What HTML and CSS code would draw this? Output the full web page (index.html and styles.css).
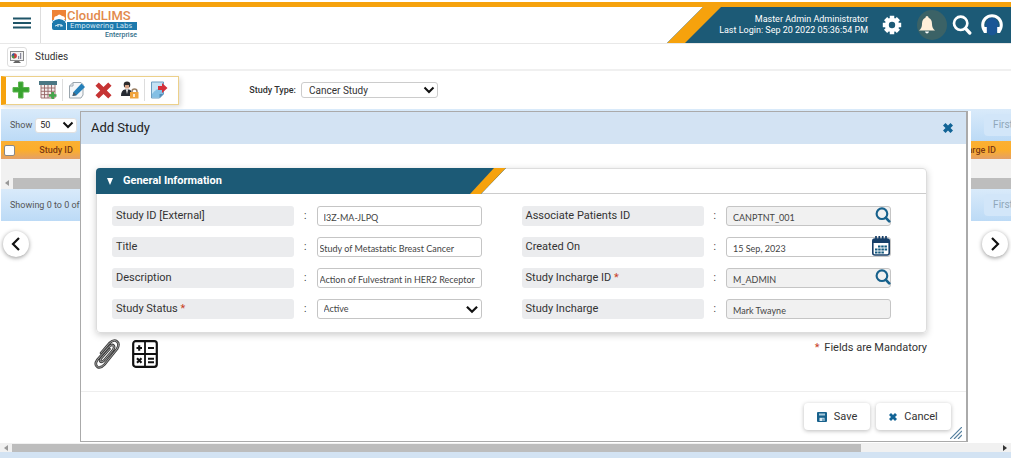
FILE: index.html
```html
<!DOCTYPE html>
<html lang="en">
<head>
<meta charset="utf-8">
<title>CloudLIMS - Studies</title>
<link rel="stylesheet" href="styles.css">
</head>
<body>
<svg class="defs" aria-hidden="true">
  <symbol id="chevron" viewBox="0 0 12 8"><path d="M1.500 1.500 6 6l4.500-4.500" fill="none" stroke="#111" stroke-width="2"/></symbol>
  <symbol id="search" viewBox="0 0 18 18"><circle cx="7.800" cy="7.500" r="6" fill="none" stroke="currentColor" stroke-width="2.400"/><path d="m12.300 12.300 3.700 3.900" stroke="currentColor" stroke-width="3" stroke-linecap="round"/></symbol>
  <symbol id="cross" viewBox="0 0 10 10"><path d="M2.500 0 5 2.500 7.500 0 10 2.500 7.500 5 10 7.500 7.500 10 5 7.500 2.500 10 0 7.500 2.500 5 0 2.500z"/></symbol>
</svg>
<div class="app">
  <header class="topbar">
    <button class="menu" aria-label="Menu"><svg width="18" height="12" viewBox="0 0 18 12"><path d="M0 1.500h18M0 6h18M0 10.500h18" stroke="#1f5568" stroke-width="1.800"/></svg></button>
    <a class="logo" href="#">
      <svg width="14" height="20" viewBox="0 0 14 20"><path d="M0 0h14v10H0z" fill="#ee8336"/><path d="M0 10h14v10H2q-2 0-2-2z" fill="#1d79ad"/><path d="M2 9q0-3 3-3 2-3 5 0 3 0 3 3l-2 1H3z" fill="#fff"/><path d="M0 11q7-7 14 0v2q-7-6-14 0z" fill="#fff"/><path d="M1 12.500q6-5 12 0" fill="none" stroke="#1d79ad" stroke-width="2"/><path d="M3 16q4-3 8 0M6 14v3M9 14v3" fill="none" stroke="#d5e9f3"/></svg>
      <span class="logo-text"><span class="brand">CloudLIMS</span><span class="motto">Empowering Labs</span><span class="edition">Enterprise</span></span>
    </a>
    <div class="account">
      <div class="who"><span>Master Admin Administrator</span><span>Last Login: Sep 20 2022 05:36:54 PM</span></div>
      <button class="round" aria-label="Settings"><svg width="20" height="20" viewBox="0 0 20 20"><g stroke="#fff" stroke-width="4.500"><path d="M10 .8v18.400M.8 10h18.400M3.600 3.600l12.800 12.800M16.400 3.600 3.600 16.400"/></g><circle cx="10" cy="10" r="7.200" fill="#fff"/><circle cx="10" cy="10" r="3.200" fill="#1c5a76"/></svg></button>
      <button class="round bell" aria-label="Notifications"><svg width="18" height="20" viewBox="0 0 18 20"><path d="M9 1q1.500 0 1.600 1.700Q14 4 14 9q0 4 3 6.500H1Q4 13 4 9q0-5 3.400-6.300Q7.500 1 9 1z" fill="#ffefd9"/><path d="M7 16.500h4q-.5 2-2 2t-2-2z" fill="#fff"/></svg></button>
      <button class="round" aria-label="Search"><svg width="20" height="20"><use href="#search"/></svg></button>
      <button class="round" aria-label="Support"><svg width="22" height="22" viewBox="0 0 22 22"><ellipse cx="11" cy="12.500" rx="6.500" ry="9" fill="#1a5696"/><path d="M4.500 18Q1.700 15 1.700 11a9.300 9.300 0 0 1 18.600 0q0 4-2.800 7" fill="none" stroke="#fff" stroke-width="3"/><path d="M4.300 13v6M17.700 13v6" stroke="#fff" stroke-width="3"/></svg></button>
    </div>
  </header>
  <nav class="crumb">
    <span class="crumb-icon"><svg width="14" height="14" viewBox="0 0 14 14"><rect x=".5" y="1.500" width="13" height="9" fill="#f1f1f1" stroke="#888"/><circle cx="4.300" cy="5.800" r="2.600" fill="#d23b37"/><path d="M4.300 5.800V3.200a2.600 2.600 0 0 0-2.600 2.600z" fill="#275ea8"/><path d="M4.300 5.800H1.700a2.600 2.600 0 0 0 2.600 2.600z" fill="#3d9b4a"/><path d="M8 9V6h1.200v3zm2 0V3h1.200v6z" fill="#889"/><path d="M5 11h4l2 2H3z" fill="#666"/></svg></span>
    <span>Studies</span>
  </nav>
  <div class="actions">
    <div class="tools">
      <button aria-label="Add"><svg width="18" height="18" viewBox="0 0 18 18"><path d="M6.500 1h4.500v5.500H17V11h-6v6H6.500v-6H1V6.500h5.500z" fill="#38a32f" stroke="#5bb44e"/></svg></button>
      <button aria-label="Add to table"><svg width="18" height="18" viewBox="0 0 18 18"><path d="M0 0h18v4H0z" fill="#4a7683"/><path d="M2 4h14v13H2z" fill="#f3eceb"/><path d="M2 4v13M5.500 4v13M9 4v13M12.500 4v13M16 4v13M2 7h14M2 10.300h14M2 13.600h14M2 17h14" stroke="#956565" stroke-width=".9"/><path d="M12.500 11h2.500v2.200h2.500v2.500H15V18h-2.500v-2.300H10v-2.500h2.500z" fill="#43a64b"/></svg></button>
      <i class="bar"></i>
      <button aria-label="Edit"><svg width="18" height="18" viewBox="0 0 18 18"><path d="M5 1.500h8l2 2V14l-2 3H1.500V5z" fill="#f5f7f9" stroke="#9aa5ad"/><path d="M1.500 5H5V1.500" fill="none" stroke="#9aa5ad"/><path d="M13.500 2.500 17 6l-8.500 8.200-4 .8 1-4z" fill="#2580b9"/><path d="m4.500 15 1-4 3 3.200z" fill="#4c5a66"/></svg></button>
      <button aria-label="Delete"><svg width="17" height="17" viewBox="0 0 18 18"><path d="M4 .5 9 5.300 14 .5 17.500 4l-5 5 5 5-3.500 3.500-5-4.800-5 4.800L.5 14l5-5-5-5z" fill="#c63434"/></svg></button>
      <button aria-label="Lock user"><svg width="18" height="18" viewBox="0 0 18 18"><circle cx="6" cy="3.800" r="3.300" fill="#2e2b2c"/><path d="M4 4h4v3.500H4z" fill="#d8a487"/><path d="M0 15q0-6 4-6.500h4q3 .5 3.500 6.500z" fill="#252a32"/><path d="M5 8.500h2L6 13z" fill="#fff"/><path d="M11 12v-1.500a2.500 2.500 0 0 1 5 0V12" fill="none" stroke="#9b8064" stroke-width="1.500"/><rect x="9" y="11" width="8.500" height="6.500" fill="#f0a33b"/><path d="M13 13v3" stroke="#fff" stroke-width="1.500"/></svg></button>
      <i class="bar"></i>
      <button aria-label="Export"><svg width="18" height="18" viewBox="0 0 18 18"><path d="M1.500 1h12v12l-4 4h-8z" fill="#c4e2f4" stroke="#6b9cc0"/><path d="M2 13q4-6 11-6v6l-4 3.500H2z" fill="#83bfe4"/><path d="M9.500 13h4l-4 4z" fill="#4f8db8"/><path d="M8 5h4V2l5.500 5-5.500 5V9H8z" fill="#d4313a"/></svg></button>
    </div>
    <label class="type-label" for="type">Study Type:</label>
    <span class="picker type-picker"><select id="type"><option>Cancer Study</option></select><svg width="12" height="8"><use href="#chevron"/></svg></span>
  </div>

  <main class="stage">
    <section class="listing">
      <div class="band">
        <label for="size">Show</label>
        <span class="picker size-picker"><select id="size"><option>50</option></select><svg width="12" height="8"><use href="#chevron"/></svg></span>
        <button class="first" disabled>First</button>
      </div>
      <table class="grid">
        <thead><tr><th class="check"><input type="checkbox" aria-label="Select all"></th><th class="sid">Study ID</th><th class="inc">Study Incharge ID</th></tr></thead>
        <tbody><tr><td></td><td></td><td></td></tr></tbody>
      </table>
      <div class="hscroll"><i class="arrow"></i><i class="thumb"></i></div>
      <div class="band"><span>Showing 0 to 0 of</span><button class="first" disabled>First</button></div>
      <div class="pager">
        <button aria-label="Previous"><svg width="10" height="14" viewBox="0 0 10 14"><path d="M8 1 2 7l6 6" fill="none" stroke="#111" stroke-width="2.200"/></svg></button>
        <button aria-label="Next"><svg width="10" height="14" viewBox="0 0 10 14"><path d="m2 1 6 6-6 6" fill="none" stroke="#111" stroke-width="2.200"/></svg></button>
      </div>
    </section>

    <form class="dialog" role="dialog" aria-labelledby="dlg">
      <div class="dialog-head"><h1 id="dlg">Add Study</h1><button type="button" class="close" aria-label="Close"><svg width="10" height="10" fill="#126496"><use href="#cross"/></svg></button></div>
      <div class="dialog-body">
        <section class="card">
          <div class="card-head"><h2><svg width="6" height="7" viewBox="0 0 6 7"><path d="M0 0h6L3 7z" fill="#fff"/></svg>General Information</h2></div>
          <div class="fields">
            <div class="field"><label for="f1">Study ID [External]</label><b>:</b><span class="box"><input id="f1" value="I3Z-MA-JLPQ"></span></div>
            <div class="field"><label for="f5">Associate Patients ID</label><b>:</b><span class="box"><input id="f5" value="CANPTNT_001" readonly><svg class="find" width="16" height="16"><use href="#search"/></svg></span></div>
            <div class="field"><label for="f2">Title</label><b>:</b><span class="box"><input id="f2" class="tight" value="Study of Metastatic Breast Cancer"></span></div>
            <div class="field"><label for="f6">Created On</label><b>:</b><span class="box"><input id="f6" value="15 Sep, 2023"><svg class="cal" width="18" height="20" viewBox="0 0 18 20"><rect x=".8" y="3" width="16.400" height="16" rx="2" fill="#fff" stroke="#173f68" stroke-width="1.600"/><path d="M1 3h16v4H1z" fill="#173f68"/><path d="M4 0v4M7.300 0v4M10.700 0v4M14 0v4" stroke="#173f68" stroke-width="1.700"/><path d="M6 10.500h9.500M3 13.500h12.500M3 16.500h9" stroke="#155b80" stroke-width="2.200" stroke-dasharray="2.500 .7"/></svg></span></div>
            <div class="field"><label for="f3">Description</label><b>:</b><span class="box"><input id="f3" class="tight" value="Action of Fulvestrant in HER2 Receptor"></span></div>
            <div class="field"><label for="f7">Study Incharge ID <em>*</em></label><b>:</b><span class="box"><input id="f7" value="M_ADMIN" readonly><svg class="find" width="16" height="16"><use href="#search"/></svg></span></div>
            <div class="field"><label for="f4">Study Status <em>*</em></label><b>:</b><span class="box picker"><select id="f4"><option>Active</option></select><svg width="14" height="9"><use href="#chevron"/></svg></span></div>
            <div class="field"><label for="f8">Study Incharge</label><b>:</b><span class="box"><input id="f8" value="Mark Twayne" readonly></span></div>
          </div>
        </section>
        <div class="extras">
          <button type="button" aria-label="Attachments"><svg width="26" height="30" viewBox="0 0 26 30"><g fill="none" stroke-linecap="round" stroke-linejoin="round"><path d="M7 14 15.500 4q4.500-4 7.500-1.500t0 7.500L10.500 25.500Q7 29.500 3.500 28q-3.500-2.500 0-7.500L15 7.500q3-2.500 4.500-1t-.5 4.500L10 21.500q-2.500 2-3.500 1t.5-3L15.500 10" stroke="#3c3c3c" stroke-width="2.600"/><path d="M7 14 15.500 4q4.500-4 7.500-1.500t0 7.500L10.500 25.500Q7 29.500 3.500 28q-3.500-2.500 0-7.500L15 7.500q3-2.500 4.500-1t-.5 4.500L10 21.500q-2.500 2-3.500 1t.5-3L15.500 10" stroke="#aaa" stroke-width=".9"/></g></svg></button>
          <button type="button" aria-label="Calculator"><svg width="26" height="28" viewBox="0 0 26 28"><rect x="1.200" y="1.200" width="23.600" height="25.600" rx="2.500" fill="#fff" stroke="#111" stroke-width="2.200"/><path d="M13 1v26M1 14h24" stroke="#111" stroke-width="1.800"/><path d="M4.500 8h5.500M7.200 5.300v5.400M16 8h6M5 18.300l4.500 4.500M9.500 18.300 5 22.800M16 18.800h6M16 22.300h6" stroke="#111" stroke-width="2.100"/></svg></button>
          <p><em>*</em> Fields are Mandatory</p>
        </div>
      </div>
      <div class="dialog-foot">
        <button type="submit"><svg width="10" height="10" viewBox="0 0 10 10"><rect width="10" height="10" rx="1" fill="#17618c"/><path d="M2 1.500h6v2H2z" fill="#a8cbdd"/><path d="M2.500 5.800h5V9h-5z" fill="#dcecf4"/><path d="M5.500 6.500h1V9h-1z" fill="#17618c"/></svg>Save</button>
        <button type="button"><svg width="8" height="8" fill="#126496"><use href="#cross"/></svg>Cancel</button>
        <svg class="grip" width="12" height="12" viewBox="0 0 12 12"><path d="M0 12 12 0M4 12l8-8M8 12l4-4" stroke="#55809f" stroke-width="1.200"/></svg>
      </div>
    </form>
  </main>
  <div class="hscroll page-scroll"><i class="arrow"></i><i class="thumb"></i><i class="arrow right"></i></div>
  <footer class="base"></footer>
</div>
</body>
</html>
```

FILE: styles.css
```css
* { box-sizing: border-box; }
body { margin: 0; background: #fff; color: #333; font: 10px/14px Roboto, "Liberation Sans", sans-serif; }
button, input, select { font: inherit; color: inherit; margin: 0; }
button { padding: 0; border: 0; background: none; display: grid; place-items: center; }
select { appearance: none; }
svg { display: block; flex: none; }
em { color: #c8411f; font-style: normal; }
.defs { position: absolute; width: 0; height: 0; }
.app { margin-right: 13px; padding-top: 2px; overflow: hidden; }

.topbar { display: flex; height: 42px; border-top: 5px solid #f6a20d; border-bottom: 1px solid #e8e8e8; }
.menu { width: 41px; padding: 0 0 4px 4px; border-right: 1px solid #ddd; }
.logo { display: flex; gap: 1px; padding: 3px 0 0 11px; text-decoration: none; }
.logo-text { display: flex; flex-direction: column; width: 70px; }
.brand { color: #e28a4c; font-weight: 500; font-size: 13px; line-height: 12px; }
.motto { background: #1d79ad; color: #d9ebf5; font: 7px/8px "DejaVu Sans", sans-serif; padding-left: 3px; white-space: nowrap; }
.edition { color: #34708a; font-weight: 500; font-size: 7px; line-height: 10px; text-align: right; }
.account { position: relative; display: flex; align-items: center; justify-content: flex-end; margin-left: auto; width: 344px; padding-right: 8px; background: #1c5a76; color: #fff; clip-path: polygon(36px 0, 100% 0, 100% 100%, 0 100%); }
.account::before { content: ""; position: absolute; inset: 0; background: #f6a20d; clip-path: polygon(36px 0, 54px 0, 18px 100%, 0 100%); }
.who { display: flex; flex-direction: column; align-items: flex-end; white-space: nowrap; font-size: 9px; line-height: 11px; margin-right: 9px; }
.round { width: 30px; height: 30px; border-radius: 50%; margin-right: 10px; }
.round + .round { margin-right: 0; }
.bell { background: #3b6266; padding-right: 10px; margin-left: 0; }
.round + .round:last-child { margin-right: -4px; }

.crumb { display: flex; align-items: center; gap: 8px; height: 27px; padding-left: 7px; border-bottom: 2px solid #f0f0f0; font-size: 10px; }
.crumb-icon { width: 20px; height: 20px; display: grid; place-items: center; border: 1px solid #ddd; border-radius: 3px; }
.actions { display: flex; align-items: center; height: 38px; padding-left: 1px; }
.tools { display: flex; align-items: center; gap: 9px; height: 29px; width: 178px; padding-left: 6px; border: 1px solid #ecd08a; border-left: 5px solid #f6a20d; box-shadow: 2px 2px 5px #ddd; }
.bar { width: 1px; height: 22px; background: #ddd; margin: 0 -4px; }
.type-label { width: 122px; text-align: right; padding-right: 5px; font-size: 9px; font-weight: 500; }
.picker { position: relative; display: block; }
.picker select { width: 100%; height: 100%; border: 1px solid #ccc; border-radius: 3px; background: #fff; padding: 0 7px; }
.picker svg { position: absolute; right: 3px; top: 50%; margin-top: -4px; pointer-events: none; }
.type-picker { width: 137px; height: 16px; }
.type-picker select { line-height: 13px; }

.stage { display: grid; overflow: hidden; }
.listing, .dialog { grid-area: 1 / 1; min-width: 0; }
.listing { padding-left: 1px; }
.band { display: flex; align-items: center; gap: 3px; height: 32px; padding-left: 9px; overflow: hidden; background: linear-gradient(#d9eafa, #bcdaf6); color: #555; font-size: 9px; }
.size-picker { width: 42px; height: 15px; }
.size-picker select { padding: 0 4px; border-color: #e0e0e0; color: #222; line-height: 12px; }
.first { margin: 0 -11px 0 auto; width: 38px; height: 22px; border-radius: 4px; background: #d2e6f9; color: #8fa6ba; font-size: 10px; }
.grid { width: 100%; border-collapse: collapse; table-layout: fixed; }
.grid th { height: 18px; padding: 0; font-size: 9px; line-height: 12px; font-weight: 500; color: #7d3a16; background: linear-gradient(#fbb034, #fcae2a 50%, #e4a067); }
.grid td { height: 18px; padding: 0; background: #f1f1f1; }
.check { width: 27px; text-align: left; }
.check input { display: block; width: 11px; height: 11px; margin: 0 0 0 3px; appearance: none; background: #fff; border: 1px solid #888; border-radius: 2px; }
.grid .sid { width: 56px; }
.grid .inc { text-align: right; padding-right: 15px; }
.hscroll { display: flex; align-items: center; height: 12px; background: #f1f1f1; }
.arrow { width: 0; margin: 0 4px; border: solid transparent; border-width: 3px 4px 3px 0; border-right-color: #999; }
.thumb { flex: 1; height: 11px; background: #bdbdbd; }
.pager { display: flex; justify-content: space-between; padding: 10px 3px 10px 2px; }
.pager button { width: 26px; height: 26px; border-radius: 50%; background: #fff; box-shadow: 0 1px 4px #999; }

.dialog { display: flex; flex-direction: column; margin: 2px 43px 1px 80px; background: #fff; border: 1px solid #aaa; border-right-width: 2px; box-shadow: 3px 0 #fff; z-index: 1; }
.dialog-head { display: flex; align-items: center; justify-content: space-between; height: 32px; padding: 0 13px 0 10px; background: #d3e3f3; }
h1 { margin: 0; font-size: 13px; font-weight: 400; color: #222; }
.dialog-body { padding: 24px 39px 22px 15px; }
.card { border: 1px solid #ddd; border-radius: 4px; box-shadow: 0 2px 7px #ccc; }
.card-head { height: 26px; border-bottom: 1px solid #ccc; }
h2 { position: relative; display: flex; align-items: center; gap: 10px; margin: -1px 0 0 -1px; width: 410px; height: 26px; padding-left: 11px; font-size: 11px; font-weight: 700; color: #fff; background: #1c5a76; border-radius: 4px 0 0; clip-path: polygon(0 0, 100% 0, 385px 100%, 0 100%); }
h2::after { content: ""; position: absolute; inset: 0; background: #f6a20d; clip-path: polygon(398px 0, 410px 0, 385px 100%, 374px 100%); }
.fields { display: grid; grid-template-columns: 1fr 1fr; gap: 11px 40px; padding: 12px 35px 13px 15px; }
.field { display: grid; grid-template-columns: 182px 1fr 165px; height: 20px; align-items: stretch; }
.field label { background: #ebecee; border-radius: 3px; padding-left: 4px; font-size: 11px; line-height: 20px; }
.field b { font-weight: 400; text-align: center; line-height: 20px; }
.box { position: relative; color: #444; }
.box input, .box select { display: block; width: 100%; height: 20px; border: 1px solid #c5c5c5; border-radius: 3px; padding: 2px 6px 0; background: #fff; font: 9px/14px Lato, "Open Sans", sans-serif; }
.box select { padding: 0 6px; }
.box .tight { padding: 2px 2px 0; }
.box input[readonly] { background: #f1f1f1; }
.find { position: absolute; right: 0; top: 1px; color: #17618c; }
.cal { position: absolute; right: 1px; top: -1px; }
.extras { display: flex; gap: 12px; align-items: flex-start; padding-top: 6px; margin-left: -2px; }
.extras button { height: 30px; }
.extras p { margin: 2px 0 0 auto; font-size: 11px; }
.extras em { margin-right: 2px; }
.dialog-foot { position: relative; display: flex; justify-content: flex-end; gap: 6px; padding: 11px 15px; border-top: 1px solid #eee; margin-top: auto; }
.dialog-foot button { display: flex; align-items: center; justify-content: center; gap: 7px; width: 66px; height: 27px; border-radius: 4px; background: #fff; box-shadow: 0 1px 4px #bbb; font-size: 11px; }
.dialog-foot button + button { width: 75px; }
.grip { position: absolute; right: 4px; bottom: 2px; }
.page-scroll { height: 9px; }
.page-scroll .thumb { flex: 0 0 84%; height: 8px; }
.page-scroll .right { margin-left: auto; border-width: 3px 0 3px 4px; border-left-color: #333; }
.base { height: 6px; background: #d3e3f3; }
```
